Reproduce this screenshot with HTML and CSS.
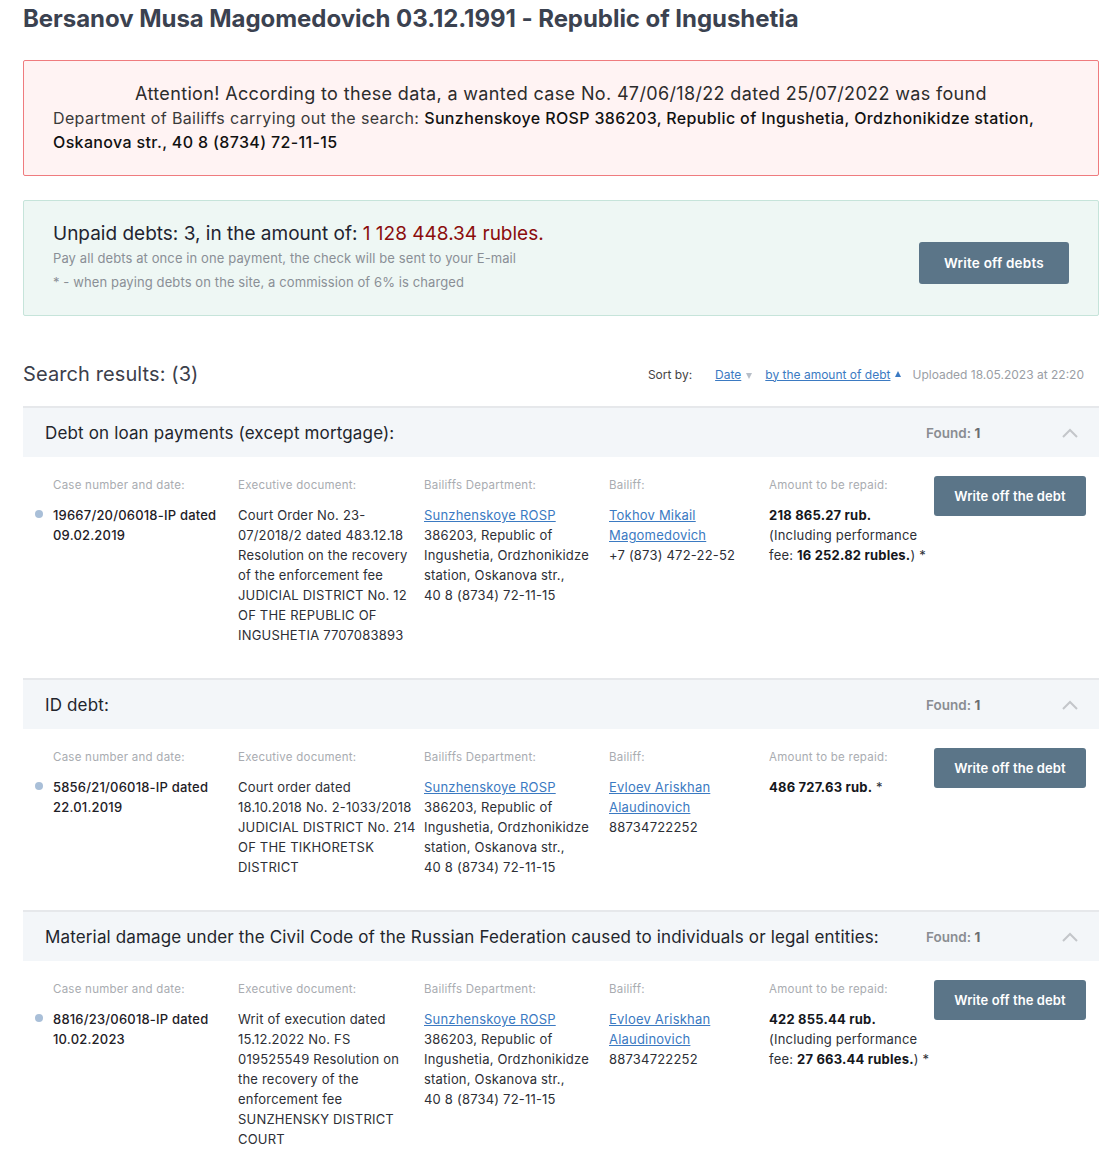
FILE: index.html
```html
<!DOCTYPE html>
<html lang="en">
<head>
<meta charset="utf-8">
<title>Bersanov Musa Magomedovich</title>
<link rel="stylesheet" href="styles.css">
</head>
<body>
<div class="page">
  <h1 class="title">Bersanov Musa Magomedovich 03.12.1991 - Republic of Ingushetia</h1>

  <div class="alert">
    <p class="alert-head">Attention! According to these data, a wanted case No. 47/06/18/22 dated 25/07/2022 was found</p>
    <p class="alert-body">Department of Bailiffs carrying out the search: <span class="alert-value">Sunzhenskoye ROSP 386203, Republic of Ingushetia, Ordzhonikidze station, Oskanova str., 40 8 (8734) 72-11-15</span></p>
  </div>

  <div class="summary">
    <div class="summary-text">
      <p class="summary-head">Unpaid debts: 3, in the amount of: <span class="summary-sum">1 128 448.34 rubles.</span></p>
      <p class="summary-note">Pay all debts at once in one payment, the check will be sent to your E-mail</p>
      <p class="summary-note">* - when paying debts on the site, a commission of 6% is charged</p>
    </div>
    <button class="btn btn-big">Write off debts</button>
  </div>

  <div class="results-bar">
    <h2 class="results-title">Search results: (3)</h2>
    <div class="sort">
      <span class="sort-label">Sort by:</span>
      <a class="sort-link" href="#">Date</a><span class="tri tri-down"></span>
      <a class="sort-link" href="#">by the amount of debt</a><span class="tri tri-up"></span>
      <span class="uploaded">Uploaded 18.05.2023 at 22:20</span>
    </div>
  </div>

  <section class="group">
    <div class="group-head">
      <h3 class="group-title">Debt on loan payments (except mortgage):</h3>
      <div class="found">Found: <b>1</b></div>
      <svg class="chev" width="16" height="10" viewBox="0 0 16 10"><path d="M1 9 L8 2 L15 9" fill="none" stroke="#c3c6ca" stroke-width="2"/></svg>
    </div>
    <div class="group-body">
      <div class="cell">
        <div class="label">Case number and date:</div>
        <div class="value case">19667/20/06018-IP dated 09.02.2019</div>
      </div>
      <div class="cell cell-doc">
        <div class="label">Executive document:</div>
        <div class="value">Court Order No. 23-07/2018/2 dated 483.12.18 Resolution on the recovery of the enforcement fee JUDICIAL DISTRICT No. 12 OF THE REPUBLIC OF INGUSHETIA 7707083893</div>
      </div>
      <div class="cell">
        <div class="label">Bailiffs Department:</div>
        <div class="value"><a href="#" class="link">Sunzhenskoye ROSP</a><br>386203, Republic of Ingushetia, Ordzhonikidze station, Oskanova str., <span class="nowrap">40 8 (8734) 72-11-15</span></div>
      </div>
      <div class="cell">
        <div class="label">Bailiff:</div>
        <div class="value"><a href="#" class="link">Tokhov Mikail Magomedovich</a><br>+7 (873) 472-22-52</div>
      </div>
      <div class="cell cell-amount">
        <div class="label">Amount to be repaid:</div>
        <div class="value"><b>218 865.27 rub.</b><br>(Including performance fee: <b>16 252.82 rubles.</b>) *</div>
      </div>
      <div class="cell cell-btn">
        <button class="btn btn-row">Write off the debt</button>
      </div>
    </div>
  </section>

  <section class="group">
    <div class="group-head">
      <h3 class="group-title">ID debt:</h3>
      <div class="found">Found: <b>1</b></div>
      <svg class="chev" width="16" height="10" viewBox="0 0 16 10"><path d="M1 9 L8 2 L15 9" fill="none" stroke="#c3c6ca" stroke-width="2"/></svg>
    </div>
    <div class="group-body">
      <div class="cell">
        <div class="label">Case number and date:</div>
        <div class="value case">5856/21/06018-IP dated 22.01.2019</div>
      </div>
      <div class="cell cell-doc">
        <div class="label">Executive document:</div>
        <div class="value">Court order dated<br>18.10.2018 No. 2-1033/2018 JUDICIAL DISTRICT No. 214 OF THE TIKHORETSK DISTRICT</div>
      </div>
      <div class="cell">
        <div class="label">Bailiffs Department:</div>
        <div class="value"><a href="#" class="link">Sunzhenskoye ROSP</a><br>386203, Republic of Ingushetia, Ordzhonikidze station, Oskanova str., <span class="nowrap">40 8 (8734) 72-11-15</span></div>
      </div>
      <div class="cell">
        <div class="label">Bailiff:</div>
        <div class="value"><a href="#" class="link">Evloev Ariskhan Alaudinovich</a><br>88734722252</div>
      </div>
      <div class="cell cell-amount">
        <div class="label">Amount to be repaid:</div>
        <div class="value"><b>486 727.63 rub.</b> *</div>
      </div>
      <div class="cell cell-btn">
        <button class="btn btn-row">Write off the debt</button>
      </div>
    </div>
  </section>

  <section class="group">
    <div class="group-head">
      <h3 class="group-title">Material damage under the Civil Code of the Russian Federation caused to individuals or legal entities:</h3>
      <div class="found">Found: <b>1</b></div>
      <svg class="chev" width="16" height="10" viewBox="0 0 16 10"><path d="M1 9 L8 2 L15 9" fill="none" stroke="#c3c6ca" stroke-width="2"/></svg>
    </div>
    <div class="group-body">
      <div class="cell">
        <div class="label">Case number and date:</div>
        <div class="value case">8816/23/06018-IP dated 10.02.2023</div>
      </div>
      <div class="cell cell-doc">
        <div class="label">Executive document:</div>
        <div class="value">Writ of execution dated 15.12.2022 No. FS<br>019525549 Resolution on the recovery of the enforcement fee SUNZHENSKY DISTRICT COURT</div>
      </div>
      <div class="cell">
        <div class="label">Bailiffs Department:</div>
        <div class="value"><a href="#" class="link">Sunzhenskoye ROSP</a><br>386203, Republic of Ingushetia, Ordzhonikidze station, Oskanova str., <span class="nowrap">40 8 (8734) 72-11-15</span></div>
      </div>
      <div class="cell">
        <div class="label">Bailiff:</div>
        <div class="value"><a href="#" class="link">Evloev Ariskhan Alaudinovich</a><br>88734722252</div>
      </div>
      <div class="cell cell-amount">
        <div class="label">Amount to be repaid:</div>
        <div class="value"><b>422 855.44 rub.</b><br>(Including performance fee: <b>27 663.44 rubles.</b>) *</div>
      </div>
      <div class="cell cell-btn">
        <button class="btn btn-row">Write off the debt</button>
      </div>
    </div>
  </section>
</div>
</body>
</html>
```

FILE: styles.css
```css
* { box-sizing: border-box; }
html, body { margin: 0; padding: 0; background: #fff; }
body {
  font-family: Inter, "Noto Sans", "Liberation Sans", sans-serif;
  color: #333;
}
p { margin: 0; }

.page {
  width: 1099px;
  padding-left: 23px;
}

.title {
  margin: 0;
  padding-top: 4px;
  font-size: 24px;
  line-height: 30px;
  font-weight: 700;
  color: #3b4250;
  letter-spacing: -0.05px;
}

.alert {
  margin-top: 26px;
  border: 1px solid #ef7b7e;
  border-radius: 2px;
  background: #fff3f3;
  padding: 21px 29px 21px;
}
.alert-head {
  text-align: center;
  font-size: 18px;
  line-height: 24px;
  letter-spacing: 0.35px;
  color: #2c2c2c;
}
.alert-body {
  font-size: 16px;
  line-height: 24px;
  letter-spacing: 0.36px;
  color: #3a3a3a;
}
.alert-value { color: #111; font-weight: 500; }

.summary {
  margin-top: 24px;
  border: 1px solid #c6e4da;
  border-radius: 2px;
  background: #eef7f4;
  padding: 21px 29px 21px;
  display: flex;
  align-items: center;
}
.summary-text { flex: 1; }
.summary-head {
  font-size: 19px;
  line-height: 24px;
  color: #1f2430;
}
.summary-sum { color: #8b0d0d; }
.summary-note {
  font-size: 13px;
  line-height: 24px;
  letter-spacing: 0.1px;
  color: #8a8f96;
}

.btn {
  border: 0;
  border-radius: 3px;
  background: #5b7588;
  color: #fff;
  font-family: inherit;
  font-weight: 600;
  cursor: pointer;
}
.btn-big {
  width: 150px;
  height: 42px;
  margin-top: 9px;
  font-size: 13.5px;
  letter-spacing: 0.2px;
}

.results-bar {
  display: flex;
  align-items: center;
  justify-content: space-between;
  height: 90px;
  padding-top: 26px;
  padding-right: 15px;
}
.results-title {
  margin: 0;
  font-size: 20px;
  font-weight: 400;
  color: #3c404b;
  letter-spacing: 0.1px;
}
.sort {
  display: flex;
  align-items: center;
  font-size: 12px;
  color: #444;
}
.sort-label { margin-right: 23px; }
.sort-link { color: #3b7ac2; text-decoration: underline; }
.tri {
  width: 0; height: 0;
  border-left: 3.5px solid transparent;
  border-right: 3.5px solid transparent;
}
.tri-down { border-top: 6px solid #b8bfc8; margin: 3px 13px 0 5px; }
.tri-up { border-bottom: 6px solid #3b7ac2; margin: -1px 11px 0 5px; }
.uploaded { color: #9a9ea5; }

.group { border-top: 2px solid #e6e8eb; }
.group-head {
  display: flex;
  align-items: center;
  height: 49px;
  background: #f3f6f9;
  padding: 0 21px 0 22px;
}
.group-title {
  flex: 1;
  margin: 0;
  font-size: 17px;
  font-weight: 400;
  letter-spacing: 0.15px;
  color: #22252c;
}
.found {
  width: 136px;
  font-size: 13.5px;
  font-weight: 600;
  color: #8a8d92;
}
.found b { color: #6a6d72; font-weight: 700; }
.chev { display: block; }

.group-body {
  display: grid;
  grid-template-columns: 185px 186px 185px 160px 165px 152px;
  padding: 19px 0 33px 30px;
}
.cell { padding-right: 10px; }
.cell-doc { padding-right: 4px; }
.cell-amount { padding-right: 0; }
.cell-btn { padding-right: 0; }
.label {
  font-size: 11.5px;
  line-height: 16px;
  letter-spacing: 0.25px;
  color: #a9acb1;
  padding-top: 1px;
  margin-bottom: 12px;
}
.value {
  font-size: 13px;
  line-height: 20px;
  letter-spacing: 0.2px;
  color: #2d2f36;
}
.value b { font-weight: 700; color: #15171c; }
.nowrap { white-space: nowrap; }
.case {
  position: relative;
  font-weight: 500;
  color: #1e2026;
}
.case::before {
  content: "";
  position: absolute;
  left: -18px;
  top: 5px;
  width: 8px;
  height: 8px;
  border-radius: 50%;
  background: #a9bfd8;
}
.link { color: #3b7ac2; text-decoration: underline; }
.btn-row {
  width: 152px;
  height: 40px;
  font-size: 13px;
  letter-spacing: 0.1px;
}
```
